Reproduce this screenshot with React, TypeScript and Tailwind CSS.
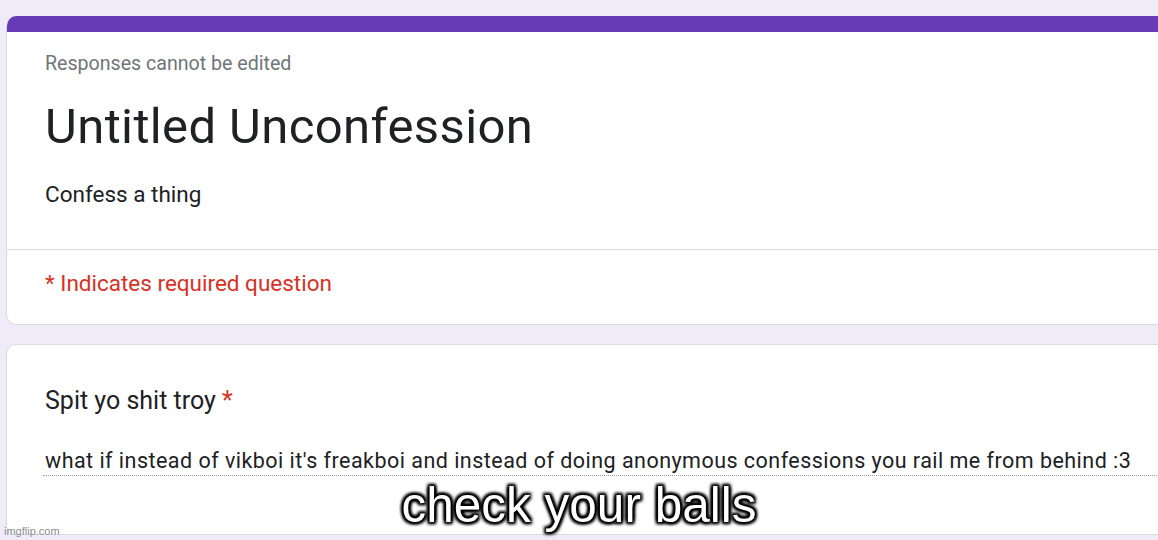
export default function App() {
  return (
    <div className="relative h-[540px] w-[1158px] overflow-hidden bg-[#f0ebf8] pl-[6px] pt-[16px] font-['Roboto',sans-serif] text-[#202124]">
      {/* header card */}
      <div className="w-[1180px] overflow-hidden rounded-[10px] border border-t-0 border-[#dadce0] bg-white">
        <div className="h-[16px] bg-[#673ab7]" />
        <div className="border-b border-[#dadce0] px-[38px] pb-[41px] pt-[20px]">
          <p className="text-[19.6px] leading-[24px] text-[#70757a]">Responses cannot be edited</p>
          <h1 className="mt-[23px] text-[49px] leading-[56px] tracking-[0.4px]">Untitled Unconfession</h1>
          <p className="mt-[25px] text-[22.5px] leading-[28px]">Confess a thing</p>
        </div>
        <p className="px-[38px] pb-[27px] pt-[19px] text-[22.5px] leading-[28px] text-[#d93025]">
          * Indicates required question
        </p>
      </div>

      {/* question card */}
      <div className="mt-[19px] w-[1180px] rounded-[10px] border border-[#dadce0] bg-white pb-[58px] pl-[36px] pt-[41px]">
        <p className="pl-[2px] text-[25px] leading-[30px]">
          Spit yo shit troy <span className="text-[#d93025]">*</span>
        </p>
        <p className="mt-[31px] border-b border-dotted border-[#9aa0a6] pl-[2px] text-[21.5px] leading-[28px] tracking-[0.47px]">
          what if instead of vikboi it's freakboi and instead of doing anonymous confessions you rail me from behind :3
        </p>
      </div>

      {/* meme caption */}
      <div className="absolute bottom-[8px] left-0 right-0 text-center font-['Liberation_Sans',Arial,sans-serif] text-[49.5px] leading-[54px] text-white [text-shadow:0_0_2px_#000,0_0_3px_#000,0_0_4px_#000,0_0_5px_#000,2px_2px_3px_#000,-2px_-2px_3px_#000,2px_-2px_3px_#000,-2px_2px_3px_#000]">
        check your balls
      </div>
      <div className="absolute bottom-[3px] left-[4px] font-['Liberation_Sans',Arial,sans-serif] text-[11px] leading-[12px] text-[#8e8e8e]">
        imgflip.com
      </div>
    </div>
  )
}
